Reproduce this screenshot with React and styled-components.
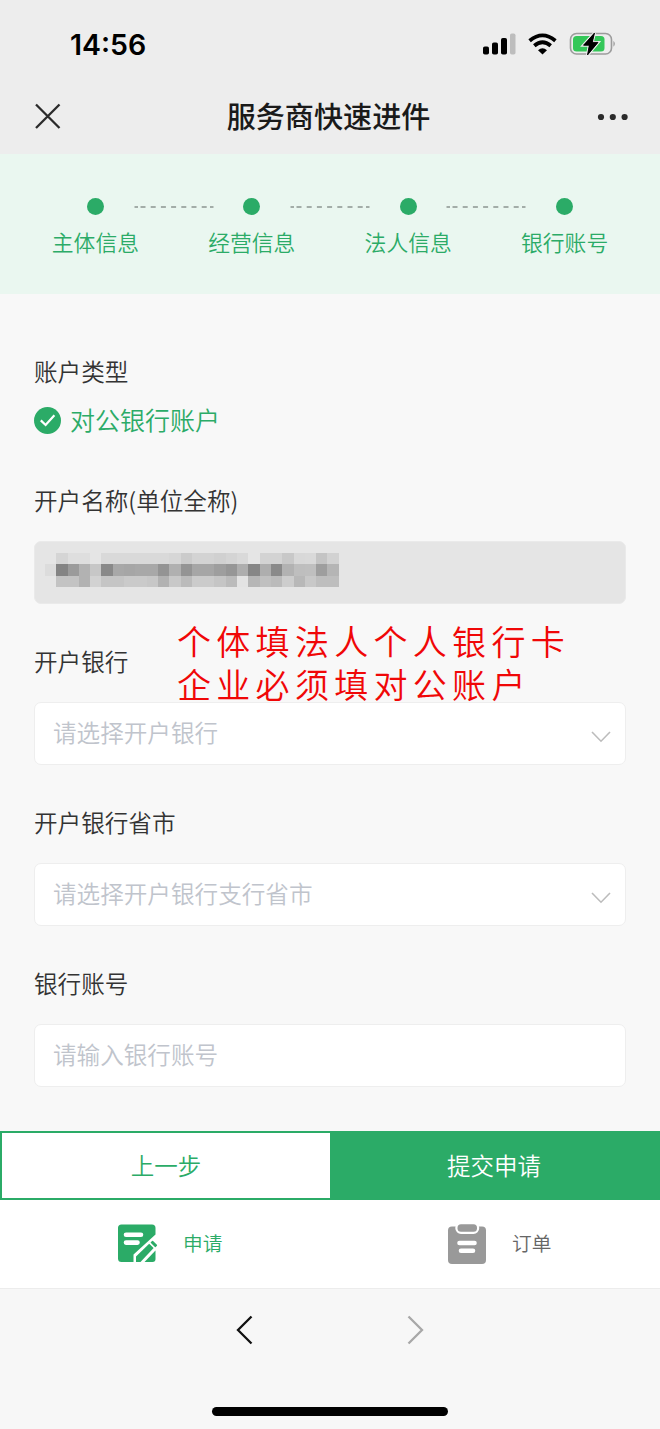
import React from "react";
import styled, { createGlobalStyle } from "styled-components";

const GREEN = "#2bab67";

const GlobalStyle = createGlobalStyle`
  * {
    box-sizing: border-box;
  }
  body {
    margin: 0;
    background: #f8f8f8;
    color: #333;
    font-family: "Noto Sans CJK SC", sans-serif;
  }
`;

const PageStyled = styled.div`
  display: flex;
  flex-direction: column;
  width: 660px;
  height: 1429px;
  overflow: hidden;
`;

const HeaderStyled = styled.header`
  height: 154px;
  background: #ededed;
`;

const StatusBar = styled.div`
  display: flex;
  align-items: center;
  justify-content: space-between;
  height: 88px;
  padding: 0 44px 0 70px;
`;

const Clock = styled.span`
  font-family: Inter, sans-serif;
  font-size: 28.5px;
  font-weight: 600;
  color: #000;
`;

const StatusIcons = styled.div`
  display: flex;
  align-items: center;
  gap: 12px;
  svg {
    display: block;
  }
`;

const NavBar = styled.div`
  display: grid;
  grid-template-columns: 30px 1fr 32px;
  align-items: center;
  height: 58px;
  padding: 0 31px 0 33px;
  svg {
    display: block;
  }
`;

const NavTitle = styled.h1`
  margin: 0;
  padding: 0 3px 3px 0;
  text-align: center;
  font-size: 29.1px;
  line-height: 55px;
  font-weight: 500;
  color: #1a1a1a;
`;

const StepsStyled = styled.div`
  display: flex;
  justify-content: center;
  height: 140px;
  padding-top: 44px;
  background: #eaf7f0;
`;

const Step = styled.div`
  display: flex;
  flex-direction: column;
  align-items: center;
  width: 88px;
  color: ${GREEN};
  font-size: 21.8px;
  line-height: 32px;
  font-weight: 350;
  white-space: nowrap;
`;

const StepDot = styled.i`
  width: 17px;
  height: 17px;
  margin-bottom: 11px;
  border-radius: 50%;
  background: ${GREEN};
`;

const StepLine = styled.svg`
  display: block;
  width: 80px;
  height: 2px;
  margin: 8px -5.8px 0;
`;

const FormStyled = styled.form`
  flex: 1;
  padding: 58px 34px 0;
`;

const Label = styled.div`
  height: 40px;
  line-height: 39px;
  font-size: 23.6px;
  font-weight: 350;
  color: #333;
`;

const Choice = styled.div`
  display: flex;
  align-items: center;
  gap: 8px;
  height: 40px;
  margin: 8px 0 41px;
  font-size: 25px;
  font-weight: 350;
  line-height: 38px;
  color: ${GREEN};
  span {
    padding-bottom: 3px;
  }
`;

const Field = styled.div`
  position: relative;
  margin-bottom: 38px;
`;

const Control = styled.div`
  display: flex;
  align-items: center;
  justify-content: space-between;
  height: 63px;
  margin-top: 20px;
  padding: 0 14px 3px ${(props) => (props.$disabled ? "10px" : "18px")};
  border: 1px solid ${(props) => (props.$disabled ? "#eaeaea" : "#eeeeee")};
  border-radius: 7px;
  background: ${(props) => (props.$disabled ? "#e5e5e5" : "#fff")};
  color: #c0c4cc;
  font-size: 23.6px;
  font-weight: 350;
`;

const Mosaic = styled.div`
  display: grid;
  grid-template-columns: repeat(26, 11.3px);
  grid-template-rows: 11px 11.5px 11.5px;
  margin-top: -2px;
`;

const Note = styled.div`
  position: absolute;
  z-index: 1;
  top: -23px;
  left: 143px;
  font-size: 34px;
  line-height: 43px;
  letter-spacing: 5.3px;
  font-weight: 350;
  white-space: nowrap;
  color: #f00707;
`;

const NoteLine = styled.div`
  height: 43px;
`;

const Actions = styled.div`
  display: grid;
  grid-template-columns: 1fr 1fr;
  height: 69px;
`;

const ActionButton = styled.button`
  padding: 0 ${(props) => (props.$primary ? "2px" : "0")} 2px 0;
  border: 2px solid ${GREEN};
  border-right-width: ${(props) => (props.$primary ? "2px" : "0")};
  background: ${(props) => (props.$primary ? GREEN : "#fff")};
  color: ${(props) => (props.$primary ? "#fff" : GREEN)};
  font-family: inherit;
  font-size: 23.5px;
  font-weight: 350;
`;

const TabBar = styled.nav`
  display: grid;
  grid-template-columns: 1fr 1fr;
  height: 89px;
  border-bottom: 1px solid #ececec;
  background: #fff;
`;

const Tab = styled.div`
  display: flex;
  align-items: center;
  gap: ${(props) => (props.$active ? "25px" : "24px")};
  padding-left: 117px;
  color: ${(props) => (props.$active ? GREEN : "#666")};
  font-size: 19.7px;
  font-weight: 350;
  span {
    padding-bottom: 3px;
  }
`;

const BrowserBar = styled.footer`
  display: flex;
  flex-direction: column;
  align-items: center;
  height: 140px;
  background: #f7f7f7;
`;

const BrowserNav = styled.div`
  display: flex;
  gap: 152px;
  padding-top: 25px;
`;

const HomeIndicator = styled.div`
  width: 236px;
  height: 9px;
  margin-top: 61px;
  border-radius: 5px;
  background: #000;
`;

// grey levels of the masked account name, one array per row
const MASK = [
  [
    229, 213, 222, 222, 229, 217, 217, 217, 217, 217, 217, 214, 203, 211, 211,
    208, 212, 217, 229, 211, 211, 200, 216, 217, 196, 210,
  ],
  [
    220, 132, 155, 178, 199, 137, 168, 166, 168, 168, 148, 176, 148, 166, 166,
    158, 150, 174, 134, 174, 138, 178, 190, 191, 158, 181,
  ],
  [
    229, 195, 195, 178, 210, 197, 197, 202, 202, 199, 178, 200, 187, 203, 203,
    197, 187, 227, 182, 192, 187, 205, 184, 200, 190, 190,
  ],
];

const STEPS = ["主体信息", "经营信息", "法人信息", "银行账号"];

const SignalIcon = () => (
  <svg width="33" height="22" viewBox="0 0 33 22">
    <rect x="0" y="13.5" width="6" height="8" rx="1.8" />
    <rect x="9" y="9.5" width="6" height="12" rx="1.8" />
    <rect x="18" y="5" width="6" height="16.5" rx="1.8" />
    <rect x="27" y="0.5" width="5.5" height="21" rx="1.8" fill="#bdbdbd" />
  </svg>
);

const WifiIcon = () => (
  <svg width="29" height="22" viewBox="0 0 29 22">
    <g fill="none" stroke="#000" strokeWidth="3.8">
      <path d="M1.6 7.8 Q14.5 -3 27.4 7.8" />
      <path d="M6.3 12.8 Q14.5 5.8 22.7 12.8" />
    </g>
    <path d="M10 17.2 Q14.5 13.2 19 17.2 L14.5 21.6 Z" />
  </svg>
);

const BatteryIcon = () => (
  <svg width="47" height="26" viewBox="0 0 47 26">
    <rect
      x="1.5"
      y="2.5"
      width="41"
      height="20.5"
      rx="6"
      fill="none"
      stroke="#9c9c9c"
      strokeWidth="1.6"
    />
    <path d="M44.5 9.8 Q47 12.8 44.5 15.8 Z" fill="#8d8d8d" />
    <rect x="4" y="5" width="31.5" height="15.5" rx="3.5" fill="#34c759" />
    <path
      d="M25.5 2 L14.5 14.2 H20.3 L18.5 24 L29 11.4 H23.3 Z"
      fill="#000"
      stroke="#ededed"
      strokeWidth="3"
      paintOrder="stroke"
    />
    <path
      d="M25.5 2 L14.5 14.2 H20.3 L18.5 24 L29 11.4 H23.3 Z"
      stroke="#000"
      strokeWidth="0.8"
      strokeLinejoin="round"
    />
  </svg>
);

const CheckIcon = () => (
  <svg width="28" height="28" viewBox="0 0 28 28">
    <circle cx="13.5" cy="14.5" r="13.5" fill={GREEN} />
    <path
      d="M6.8 14.4 L11.6 19 L20.4 9.2"
      fill="none"
      stroke="#fff"
      strokeWidth="2.2"
    />
  </svg>
);

const DownIcon = () => (
  <svg width="20" height="12" viewBox="0 0 20 12" style={{ marginTop: 10 }}>
    <path d="M1 1 L10 10.2 L19 1" fill="none" stroke="#bcbcbc" strokeWidth="1.6" />
  </svg>
);

const ApplyIcon = () => (
  <svg width="41" height="42" viewBox="0 0 41 42">
    <path
      d="M4.5 1.5 H35 Q38.5 1.5 38.5 5 V11.5 L16.5 31.5 V39 H4.5 Q1 39 1 35.5 V5 Q1 1.5 4.5 1.5 Z"
      fill={GREEN}
    />
    <path
      d="M9 11.8 H24 M9 19.6 H20.5"
      stroke="#fff"
      strokeWidth="4.6"
      strokeLinecap="round"
    />
    <path
      d="M19 39 V33.5 L32.2 20.8 L36.6 25 L23.5 39 Z"
      fill={GREEN}
      strokeLinejoin="round"
    />
    <path
      d="M34.4 19.6 L35.6 18.6 L39.4 22.2 L38.4 23.4 Z"
      fill={GREEN}
      stroke={GREEN}
      strokeWidth="1.4"
      strokeLinejoin="round"
    />
    <path d="M38.5 27.5 V36 Q38.5 39 35.5 39 H27.5 Z" fill={GREEN} />
  </svg>
);

const OrderIcon = () => (
  <svg width="41" height="42" viewBox="0 0 41 42">
    <rect x="1" y="3.5" width="38" height="37.5" rx="4" fill="#999" />
    <rect
      x="10.5"
      y="1.2"
      width="19.5"
      height="7.5"
      rx="3.5"
      fill="#999"
      stroke="#fff"
      strokeWidth="4.4"
      paintOrder="stroke"
    />
    <path
      d="M12.5 20 H27.5 M14 27.8 H26"
      stroke="#fff"
      strokeWidth="4.6"
      strokeLinecap="round"
    />
  </svg>
);

const App = () => {
  return (
    <PageStyled>
      <GlobalStyle />
      <HeaderStyled>
        <StatusBar>
          <Clock>14:56</Clock>
          <StatusIcons>
            <SignalIcon />
            <WifiIcon />
            <BatteryIcon />
          </StatusIcons>
        </StatusBar>
        <NavBar>
          <svg width="30" height="30" viewBox="0 0 30 30">
            <path
              d="M3 2.5 L26.5 26 M26.5 2.5 L3 26"
              stroke="#2b2b2b"
              strokeWidth="2.3"
            />
          </svg>
          <NavTitle>服务商快速进件</NavTitle>
          <svg width="32" height="8" viewBox="0 0 32 8" fill="#2b2b2b">
            <circle cx="4" cy="4" r="3.1" />
            <circle cx="15.8" cy="4" r="3.1" />
            <circle cx="27.6" cy="4" r="3.1" />
          </svg>
        </NavBar>
      </HeaderStyled>

      <StepsStyled>
        {STEPS.map((step, index) => (
          <React.Fragment key={step}>
            {index > 0 && (
              <StepLine viewBox="0 0 80 2">
                <path
                  d="M0.5 1 H4 M6.5 1 H74 M76 1 H79.5"
                  stroke="#8c9590"
                  strokeWidth="1.4"
                  strokeDasharray="5 5.2"
                />
              </StepLine>
            )}
            <Step>
              <StepDot />
              {step}
            </Step>
          </React.Fragment>
        ))}
      </StepsStyled>

      <FormStyled>
        <Label>账户类型</Label>
        <Choice>
          <CheckIcon />
          <span>对公银行账户</span>
        </Choice>
        <Field>
          <Label>开户名称(单位全称)</Label>
          <Control $disabled>
            <Mosaic>
              {MASK.flat().map((level, index) => (
                <i
                  key={index}
                  style={{ background: `rgb(${level}, ${level}, ${level})` }}
                />
              ))}
            </Mosaic>
          </Control>
        </Field>
        <Field>
          <Label>开户银行</Label>
          <Note>
            <NoteLine>个体填法人个人银行卡</NoteLine>
            <NoteLine>企业必须填对公账户</NoteLine>
          </Note>
          <Control>
            请选择开户银行
            <DownIcon />
          </Control>
        </Field>
        <Field>
          <Label>开户银行省市</Label>
          <Control>
            请选择开户银行支行省市
            <DownIcon />
          </Control>
        </Field>
        <Field>
          <Label>银行账号</Label>
          <Control>请输入银行账号</Control>
        </Field>
      </FormStyled>

      <Actions>
        <ActionButton>上一步</ActionButton>
        <ActionButton $primary>提交申请</ActionButton>
      </Actions>
      <TabBar>
        <Tab $active>
          <ApplyIcon />
          <span>申请</span>
        </Tab>
        <Tab>
          <OrderIcon />
          <span>订单</span>
        </Tab>
      </TabBar>
      <BrowserBar>
        <BrowserNav>
          <svg width="18" height="32" viewBox="0 0 18 32">
            <path
              d="M15.5 2.5 L2 16 L15.5 29.5"
              fill="none"
              stroke="#111"
              strokeWidth="2.3"
            />
          </svg>
          <svg width="18" height="32" viewBox="0 0 18 32">
            <path
              d="M2.5 2.5 L16 16 L2.5 29.5"
              fill="none"
              stroke="#a8a8a8"
              strokeWidth="2.3"
            />
          </svg>
        </BrowserNav>
        <HomeIndicator />
      </BrowserBar>
    </PageStyled>
  );
};

export default App;
